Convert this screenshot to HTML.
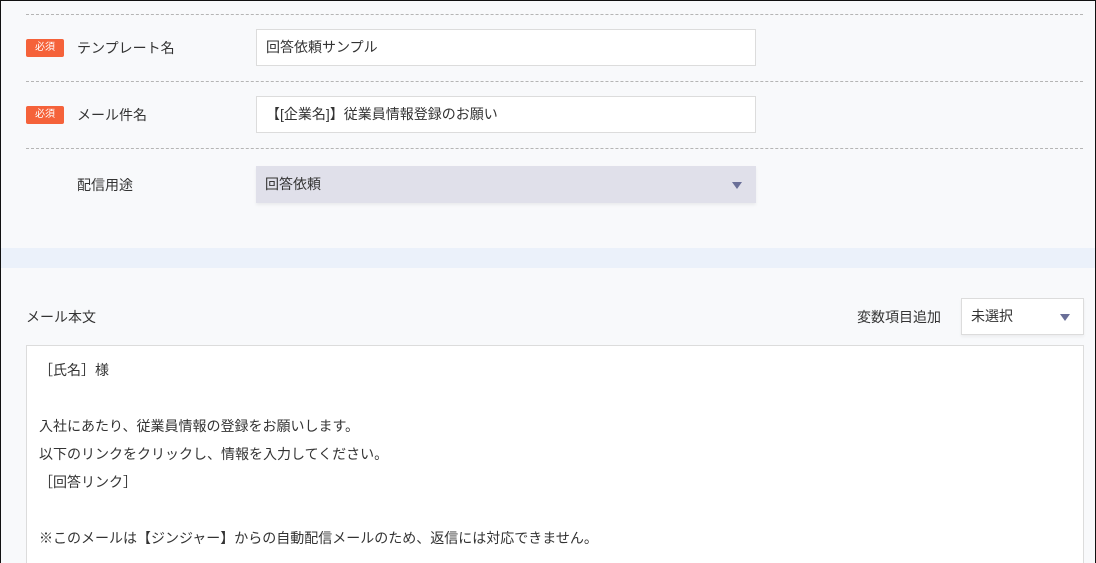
<!DOCTYPE html>
<html><head><meta charset="utf-8"><style>
*{margin:0;padding:0;box-sizing:border-box}
html{width:1096px;height:563px;overflow:hidden}
body{width:1096px;height:563px;overflow:hidden;background:#f8f9fb;font-family:"Liberation Sans","Noto Sans CJK JP",sans-serif;color:#333;font-size:14px;position:relative}
.frame{position:absolute;left:0;top:0;width:1096px;height:563px;border:1px solid #111;border-bottom:none;pointer-events:none;z-index:5}
.dash{position:absolute;left:26px;width:1057px;border-top:1px dashed #b5b5b5}
.req{position:absolute;left:26px;width:38px;height:18px;background:#f5623a;color:#fff;font-size:10px;border-radius:2px;text-align:center;line-height:18px}
.lbl{position:absolute;left:77px;font-size:14px;line-height:20px}
.inp{position:absolute;left:256px;width:500px;height:37px;background:#fff;border:1px solid #dcdcdc;padding-left:9px;line-height:35px;font-size:14px}
.sel{background:#e0e0ea;border:none;line-height:37px;box-shadow:0 2px 3px rgba(0,0,0,.06)}
.tri{position:absolute;width:0;height:0;border-left:5px solid transparent;border-right:5px solid transparent;border-top:7px solid #6a6f98}
.band{position:absolute;left:0;top:248px;width:1096px;height:20px;background:#ebf1fa}
.ta{position:absolute;left:26px;top:345px;width:1058px;height:218px;overflow:hidden;background:#fff;border:1px solid #dcdcdc;border-bottom:none;padding:10px 0 0 12px;line-height:28px;font-size:14px}
</style></head><body>
<div class="frame"></div>
<div class="dash" style="top:14px"></div>
<div class="req" style="top:39px">必須</div>
<div class="lbl" style="top:38px">テンプレート名</div>
<div class="inp" style="top:29px">回答依頼サンプル</div>
<div class="dash" style="top:81px"></div>
<div class="req" style="top:106px">必須</div>
<div class="lbl" style="top:105px">メール件名</div>
<div class="inp" style="top:96px">【[企業名]】従業員情報登録のお願い</div>
<div class="dash" style="top:148px"></div>
<div class="lbl" style="top:175px">配信用途</div>
<div class="inp sel" style="top:166px">回答依頼<span class="tri" style="left:476px;top:16px"></span></div>
<div class="band"></div>
<div class="lbl" style="left:26px;top:307px">メール本文</div>
<div class="lbl" style="left:857px;top:307px">変数項目追加</div>
<div class="inp" style="left:961px;top:298px;width:123px;height:37px;box-shadow:0 2px 3px rgba(0,0,0,.05)">未選択<span class="tri" style="left:98px;top:15px"></span></div>
<div class="ta">［氏名］様<br><br>入社にあたり、従業員情報の登録をお願いします。<br>以下のリンクをクリックし、情報を入力してください。<br>［回答リンク］<br><br>※このメールは【ジンジャー】からの自動配信メールのため、返信には対応できません。</div>
</body></html>
